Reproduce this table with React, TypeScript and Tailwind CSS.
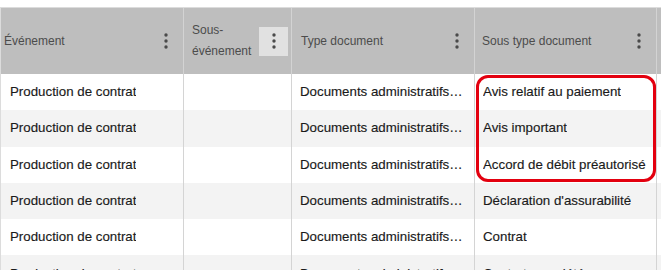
import React from "react";

const Dots = () => (
  <svg width="6" height="18" viewBox="0 0 6 18" className="block">
    <circle cx="3" cy="3" r="1.7" fill="#4a4a4a" />
    <circle cx="3" cy="9" r="1.7" fill="#4a4a4a" />
    <circle cx="3" cy="15" r="1.7" fill="#4a4a4a" />
  </svg>
);

const rows = [
  ["Production de contrat", "", "Documents administratifs et légaux", "Avis relatif au paiement"],
  ["Production de contrat", "", "Documents administratifs et légaux", "Avis important"],
  ["Production de contrat", "", "Documents administratifs et légaux", "Accord de débit préautorisé"],
  ["Production de contrat", "", "Documents administratifs et légaux", "Déclaration d'assurabilité"],
  ["Production de contrat", "", "Documents administratifs et légaux", "Contrat"],
  ["Production de contrat", "", "Documents administratifs et légaux", "Contrat complété"],
];

const cols = "grid grid-cols-[183px_108px_183px_182px_1fr]";

export default function App() {
  return (
    <div
      className="relative w-[661px] h-[270px] overflow-hidden bg-white pt-[7px]"
      style={{ fontFamily: '"Liberation Sans", Arial, sans-serif' }}
    >
      <div className="border-t border-l border-[#dcdcdc]">
        {/* header */}
        <div className={`${cols} h-[66px] bg-[#bebebe] text-[12px] text-[#4c4c4c]`}>
          <div className="flex items-center pl-[3px] pr-[3px] border-r border-[#d3d3d3]">
            <span className="flex-1">Événement</span>
            <div className="w-[29px] h-[29px] flex items-center justify-center">
              <Dots />
            </div>
          </div>
          <div className="flex items-center pl-[8px] pr-[3px] border-r border-[#d3d3d3]">
            <span className="flex-1 leading-[21px]">Sous-<br />événement</span>
            <div className="w-[29px] h-[29px] flex items-center justify-center bg-[#e1e1e1]">
              <Dots />
            </div>
          </div>
          <div className="flex items-center pl-[9px] pr-[3px] border-r border-[#d3d3d3]">
            <span className="flex-1">Type document</span>
            <div className="w-[29px] h-[29px] flex items-center justify-center">
              <Dots />
            </div>
          </div>
          <div className="flex items-center pl-[7px] pr-[3px] border-r border-[#d3d3d3]">
            <span className="flex-1">Sous type document</span>
            <div className="w-[29px] h-[29px] flex items-center justify-center">
              <Dots />
            </div>
          </div>
          <div />
        </div>
        {/* body */}
        {rows.map((r, i) => (
          <div
            key={i}
            className={`${cols} h-[36.3px] text-[13.3px] leading-[16px] text-[#1a1a1a] [-webkit-text-stroke:0.15px_#1a1a1a] ${i % 2 === 1 ? "bg-[#f3f3f3]" : "bg-white"}`}
          >
            <div className="flex items-center pl-[9px] pr-[8px] border-r border-[#d4d4d4] overflow-hidden">
              <span className="truncate">{r[0]}</span>
            </div>
            <div className="flex items-center px-[9px] border-r border-[#d4d4d4] overflow-hidden">
              <span className="truncate">{r[1]}</span>
            </div>
            <div className="flex items-center pl-[8px] pr-[8px] border-r border-[#d4d4d4] overflow-hidden">
              <span className="truncate min-w-0">{r[2]}</span>
            </div>
            <div className="flex items-center pl-[8px] pr-[4px] border-r border-[#d4d4d4] overflow-hidden">
              <span className="truncate">{r[3]}</span>
            </div>
            <div />
          </div>
        ))}
      </div>
      {/* red annotation */}
      <div className="absolute left-[476px] top-[75px] w-[180px] h-[107px] border-[3px] border-[#e3000f] rounded-[12px] pointer-events-none" />
    </div>
  );
}
